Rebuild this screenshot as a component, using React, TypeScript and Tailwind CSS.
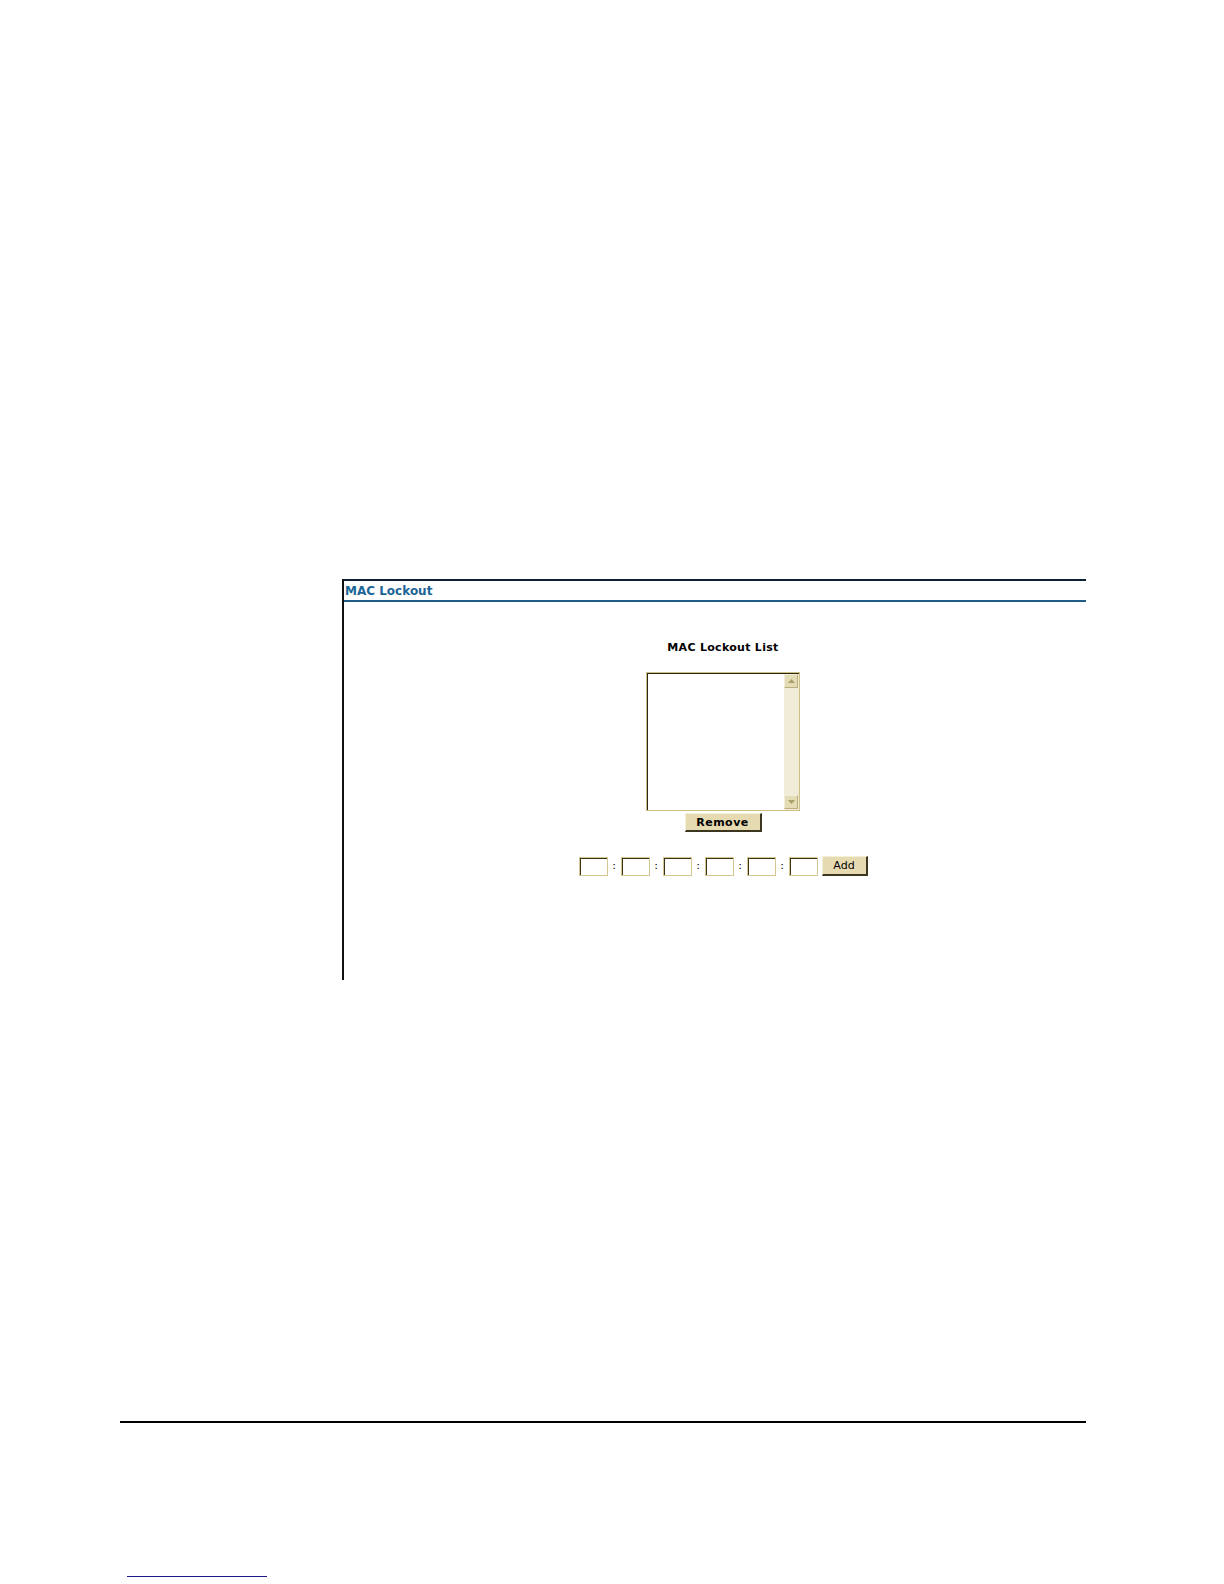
import React from 'react';

const font = { fontFamily: '"DejaVu Sans", Verdana, sans-serif' };

function OctetBox() {
  return (
    <div className="h-[19px] w-[29px] border border-[#d3c690]">
      <div className="h-full w-full border-l border-t border-[#3b3418] bg-white" />
    </div>
  );
}

function ScrollArrow({ up }: { up?: boolean }) {
  return (
    <div className="flex h-[14px] w-[14px] items-center justify-center border border-b-[#b9ae7c] border-r-[#b9ae7c] border-l-[#f3eed9] border-t-[#f3eed9] bg-[#e4dcb5]">
      <svg width="7" height="4" viewBox="0 0 7 4">
        <path d={up ? 'M0 4 L3.5 0 L7 4 Z' : 'M0 0 L3.5 4 L7 0 Z'} fill="#a99f68" />
      </svg>
    </div>
  );
}

function BeigeButton({ label, bold, className }: { label: string; bold?: boolean; className: string }) {
  return (
    <button
      type="button"
      className={`flex items-center justify-center border-b-2 border-r-2 border-l border-t border-b-[#3c3520] border-r-[#3c3520] border-l-[#f4efd8] border-t-[#f4efd8] bg-[#e6dbb0] text-[11px] leading-none text-black ${bold ? 'font-bold tracking-[0.5px]' : ''} ${className}`}
      style={font}
    >
      {label}
    </button>
  );
}

export default function App() {
  return (
    <div className="relative h-[1584px] w-[1224px] overflow-hidden bg-white" style={font}>
      <div className="pt-[579px]">
        <div className="ml-[342px] h-[401px] w-[744px] border-l-2 border-t-2 border-l-[#111] border-t-[#0d2136]">
          <div className="flex h-[21px] items-center border-b-2 border-[#1f5c8a] pl-px text-[12px] font-bold text-[#1b6597]">
            MAC Lockout
          </div>
          <div className="flex flex-col items-center pl-[16px] pt-[39px]">
            <div className="text-[11px] font-bold leading-[13px] tracking-[0.3px] text-black">MAC Lockout List</div>
            <div className="mt-[18px] flex h-[139px] w-[154px] border border-[#cdbf86]">
              <div className="flex flex-1 border-l border-t border-[#2d2612] bg-white">
                <div className="flex-1" />
                <div className="flex w-[15px] flex-col justify-between bg-[#f1ecd8] pb-px">
                  <ScrollArrow up />
                  <ScrollArrow />
                </div>
              </div>
            </div>
            <BeigeButton label="Remove" bold className="mt-[2px] h-[19px] w-[77px]" />
            <div className="mt-[24px] flex items-center">
              {[0, 1, 2, 3, 4, 5].map((i) => (
                <React.Fragment key={i}>
                  {i > 0 && <span className="w-[13px] text-center text-[11px] text-black">:</span>}
                  <OctetBox />
                </React.Fragment>
              ))}
              <BeigeButton label="Add" className="ml-[4px] h-[20px] w-[46px]" />
            </div>
          </div>
        </div>
        <div className="ml-[120px] mt-[441px] h-[2px] w-[966px] bg-black" />
        <div className="ml-[127px] mt-[153px] h-px w-[140px] bg-[#1a1a8c]" />
      </div>
    </div>
  );
}
